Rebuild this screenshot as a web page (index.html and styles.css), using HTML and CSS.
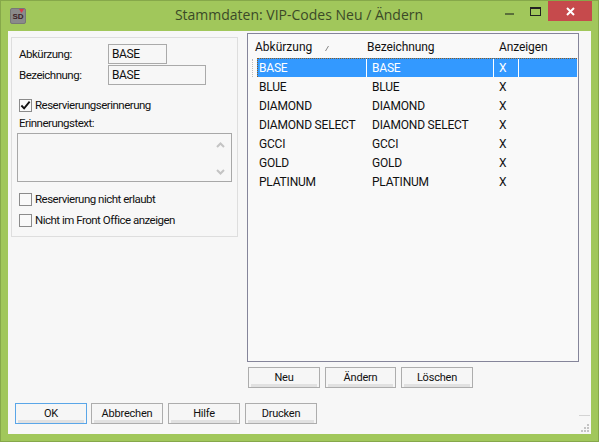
FILE: index.html
```html
<!DOCTYPE html>
<html lang="de">
<head>
  <meta charset="UTF-8" />
  <title>Stammdaten: VIP-Codes Neu / Ändern</title>
  <link rel="stylesheet" href="styles.css">
</head>
<body>
  <div class="window">
    <header class="titlebar">
      <div class="app-icon">
        <span class="app-icon-text">SD</span>
        <svg class="app-icon-mark" width="5" height="4" viewBox="0 0 5 4"><path d="M0 0h5L2.5 4z" fill="#d8384a"/></svg>
      </div>
      <h1 class="title">Stammdaten: VIP-Codes Neu / Ändern</h1>
      <div class="controls">
        <span class="ctl ctl-min"><span class="min-bar"></span></span>
        <span class="ctl ctl-max"><span class="max-box"></span></span>
        <span class="ctl ctl-close">
          <svg width="9" height="9" viewBox="0 0 9 9"><path d="M1 1l7 7M8 1L1 8" stroke="#fff" stroke-width="2"/></svg>
        </span>
      </div>
    </header>

    <div class="client">
      <div class="main">
        <section class="group">
          <div class="field">
            <label class="field-label">Abkürzung:</label>
            <div class="input input-short">BASE</div>
          </div>
          <div class="field field-second">
            <label class="field-label">Bezeichnung:</label>
            <div class="input input-long">BASE</div>
          </div>

          <div class="check check-first">
            <span class="box">
              <svg width="12" height="11" viewBox="0 0 12 11"><path d="M1.5 5.5l3 3.2 6-7.5" fill="none" stroke="#111" stroke-width="2"/></svg>
            </span>
            <span>Reservierungserinnerung</span>
          </div>
          <div class="memo-label">Erinnerungstext:</div>
          <div class="memo">
            <svg class="arrow" width="9" height="6" viewBox="0 0 9 6"><path d="M1 5l3.5-3.5L8 5" fill="none" stroke="#c4c4c4" stroke-width="2"/></svg>
            <svg class="arrow" width="9" height="6" viewBox="0 0 9 6"><path d="M1 1l3.5 3.5L8 1" fill="none" stroke="#c4c4c4" stroke-width="2"/></svg>
          </div>
          <div class="check check-third">
            <span class="box"></span>
            <span>Reservierung nicht erlaubt</span>
          </div>
          <div class="check check-fourth">
            <span class="box"></span>
            <span>Nicht im Front Office anzeigen</span>
          </div>
        </section>

        <section class="side">
          <div class="list">
            <div class="list-head">
              <span class="col-a">Abkürzung<svg class="sort" width="4" height="5" viewBox="0 0 4 5"><path d="M3.5 0L.5 5" stroke="#888"/></svg></span>
              <span class="col-b">Bezeichnung</span>
              <span class="col-c">Anzeigen</span>
            </div>
            <div class="row row-selected">
              <span class="col-a">BASE</span><span class="col-b">BASE</span><span class="col-c">X</span><span class="col-d"></span>
            </div>
            <div class="row"><span class="col-a">BLUE</span><span class="col-b">BLUE</span><span class="col-c">X</span></div>
            <div class="row"><span class="col-a">DIAMOND</span><span class="col-b">DIAMOND</span><span class="col-c">X</span></div>
            <div class="row"><span class="col-a">DIAMOND SELECT</span><span class="col-b">DIAMOND SELECT</span><span class="col-c">X</span></div>
            <div class="row"><span class="col-a">GCCI</span><span class="col-b">GCCI</span><span class="col-c">X</span></div>
            <div class="row"><span class="col-a">GOLD</span><span class="col-b">GOLD</span><span class="col-c">X</span></div>
            <div class="row"><span class="col-a">PLATINUM</span><span class="col-b">PLATINUM</span><span class="col-c">X</span></div>
          </div>
          <div class="list-buttons">
            <button class="btn">Neu</button>
            <button class="btn">Ändern</button>
            <button class="btn">Löschen</button>
          </div>
        </section>
      </div>

      <footer class="footer">
        <button class="btn btn-default">OK</button>
        <button class="btn">Abbrechen</button>
        <button class="btn">Hilfe</button>
        <button class="btn">Drucken</button>
      </footer>

      <span class="grip-line"></span>
      <svg class="grip" width="9" height="9" viewBox="0 0 9 9" fill="#c4c4c4">
        <rect x="6" y="0" width="2" height="2"/><rect x="3" y="3" width="2" height="2"/><rect x="6" y="3" width="2" height="2"/>
        <rect x="0" y="6" width="2" height="2"/><rect x="3" y="6" width="2" height="2"/><rect x="6" y="6" width="2" height="2"/>
      </svg>
    </div>
  </div>
</body>
</html>
```

FILE: styles.css
```css
* {
  box-sizing: border-box;
}

html, body {
  margin: 0;
  height: 100%;
}

body {
  font-family: Roboto, "Open Sans", sans-serif;
  font-size: 12px;
  color: #111;
  overflow: hidden;
}

.window {
  width: 599px;
  height: 442px;
  display: flex;
  flex-direction: column;
  background: #a1c75b;
  border: 1px solid #86a84a;
  padding: 0 7px 7px;
}

/* title bar */
.titlebar {
  display: flex;
  height: 30px;
  flex: none;
}

.app-icon {
  position: relative;
  width: 16px;
  height: 16px;
  margin: 7px 0 0 2px;
  background: #8a8a8a;
  border: 1px solid #777;
  border-radius: 2px;
  text-align: center;
}

.app-icon-text {
  display: block;
  font: bold 8px/15px "Liberation Sans", sans-serif;
  color: #3a2226;
}

.app-icon-mark {
  position: absolute;
  top: 0;
  right: 1px;
}

.title {
  flex: 1;
  margin: 0;
  padding-left: 76px;
  font-family: "Open Sans", sans-serif;
  font-weight: 400;
  font-size: 14px;
  line-height: 28px;
  text-align: center;
  color: #3b4a28;
}

.controls {
  display: flex;
  height: 20px;
  margin-right: -1px;
}

.ctl {
  display: flex;
  align-items: center;
  justify-content: center;
}

.ctl-min,
.ctl-max {
  width: 26px;
}

.min-bar {
  width: 9px;
  height: 2px;
  background: #5a6f3a;
  margin-top: 6px;
}

.max-box {
  width: 11px;
  height: 9px;
  border: 1px solid #222;
  border-top-width: 2px;
}

.ctl-close {
  width: 44px;
  background: #c64a4c;
}

/* client area */
.client {
  position: relative;
  flex: 1;
  background: #f7f7f7;
  padding: 2px 12px 9px 3px;
  display: flex;
  flex-direction: column;
}

.main {
  display: flex;
  gap: 9px;
}

.group {
  width: 227px;
  height: 200px;
  margin-top: 4px;
  border: 1px solid #dedede;
  padding: 6px 6px 0 7px;
  font-size: 11.5px;
  letter-spacing: -0.5px;
}

.field {
  display: flex;
  align-items: center;
}

.field-second {
  margin-top: 1px;
}

.field-label {
  width: 89px;
}

.input {
  height: 20px;
  border: 1px solid #aaa;
  padding: 0 3px;
  line-height: 18px;
  font-size: 12px;
  letter-spacing: -0.4px;
}

.input-short {
  width: 59px;
}

.input-long {
  width: 98px;
}

.check {
  display: flex;
  align-items: center;
  gap: 3px;
  height: 16px;
}

.check-first {
  margin-top: 12px;
}

.check-third {
  margin-top: 9px;
}

.check-fourth {
  margin-top: 5px;
}

.box {
  width: 13px;
  height: 13px;
  border: 1px solid #8b8b8b;
  background: #f9f9f9;
  display: flex;
  align-items: center;
  justify-content: center;
  flex: none;
}

.memo-label {
  margin-top: 3px;
  height: 15px;
  line-height: 15px;
}

.memo {
  width: 215px;
  height: 49px;
  margin-left: -2px;
  margin-top: 2px;
  border: 1px solid #a8a8a8;
  padding: 8px 6px 6px 0;
  display: flex;
  flex-direction: column;
  align-items: flex-end;
  justify-content: space-between;
}

.side {
  width: 332px;
}

.list {
  height: 329px;
  background: #f9f9f9;
  border: 1px solid #85859a;
  padding: 0 1px;
  letter-spacing: -0.2px;
}

.list-head {
  display: flex;
  height: 24px;
  line-height: 24px;
  padding-top: 1px;
  letter-spacing: -0.1px;
}

.list-head .col-a {
  padding-left: 6px;
  letter-spacing: 0;
}

.list-head .col-b {
  padding-left: 1px;
}

.sort {
  margin-left: 13px;
}

.col-a {
  width: 117px;
  flex: none;
  padding-left: 10px;
  white-space: nowrap;
}

.col-b {
  width: 127px;
  flex: none;
  padding-left: 6px;
  white-space: nowrap;
}

.col-c {
  width: 25px;
  flex: none;
  padding-left: 6px;
  white-space: nowrap;
}

.list-head .col-c {
  width: auto;
}

.row {
  display: flex;
  height: 19px;
  line-height: 19px;
}

.row-selected {
  position: relative;
  height: 19px;
  margin: 0 0 1px 8px;
  background: #3399ff;
  color: #fff;
  border-top: 1px dotted #8a5a20;
  border-left: 1px dotted #8a5a20;
  line-height: 18px;
}

/* faint focus dots left of the selected row */
.row-selected::before {
  content: "";
  position: absolute;
  left: -6px;
  top: 0;
  height: 18px;
  border-left: 1px dotted #bbb;
}

.row-selected .col-a {
  width: 108px;
  padding-left: 1px;
}

.row-selected .col-b,
.row-selected .col-c,
.row-selected .col-d {
  border-left: 1px solid #fff;
}

.row-selected .col-b,
.row-selected .col-c {
  padding-left: 5px;
}

.row-selected .col-d {
  flex: 1;
}

.list-buttons {
  display: flex;
  gap: 5px;
  margin-top: 5px;
  padding-left: 1px;
}

.list-buttons .btn:nth-child(2) {
  width: 71px;
}

.footer {
  display: flex;
  gap: 4px;
  margin-top: 15px;
  padding-left: 4px;
}

.footer .btn + .btn + .btn {
  margin-left: 1px;
}

.btn {
  width: 72px;
  height: 21px;
  padding: 0 0 1px;
  border: 1px solid #adadad;
  background: linear-gradient(#e1e1e1, #e1e1e1) no-repeat center bottom / calc(100% - 4px) 3px, #f6f6f6;
  font: inherit;
  font-size: 11px;
  letter-spacing: -0.2px;
  color: #111;
}

.btn-default {
  border-color: #5aa6e8;
}

.grip-line {
  position: absolute;
  right: 1px;
  bottom: 18px;
  width: 11px;
  border-top: 1px solid #d4d4d4;
}

.grip {
  position: absolute;
  right: 1px;
  bottom: 1px;
}
```
